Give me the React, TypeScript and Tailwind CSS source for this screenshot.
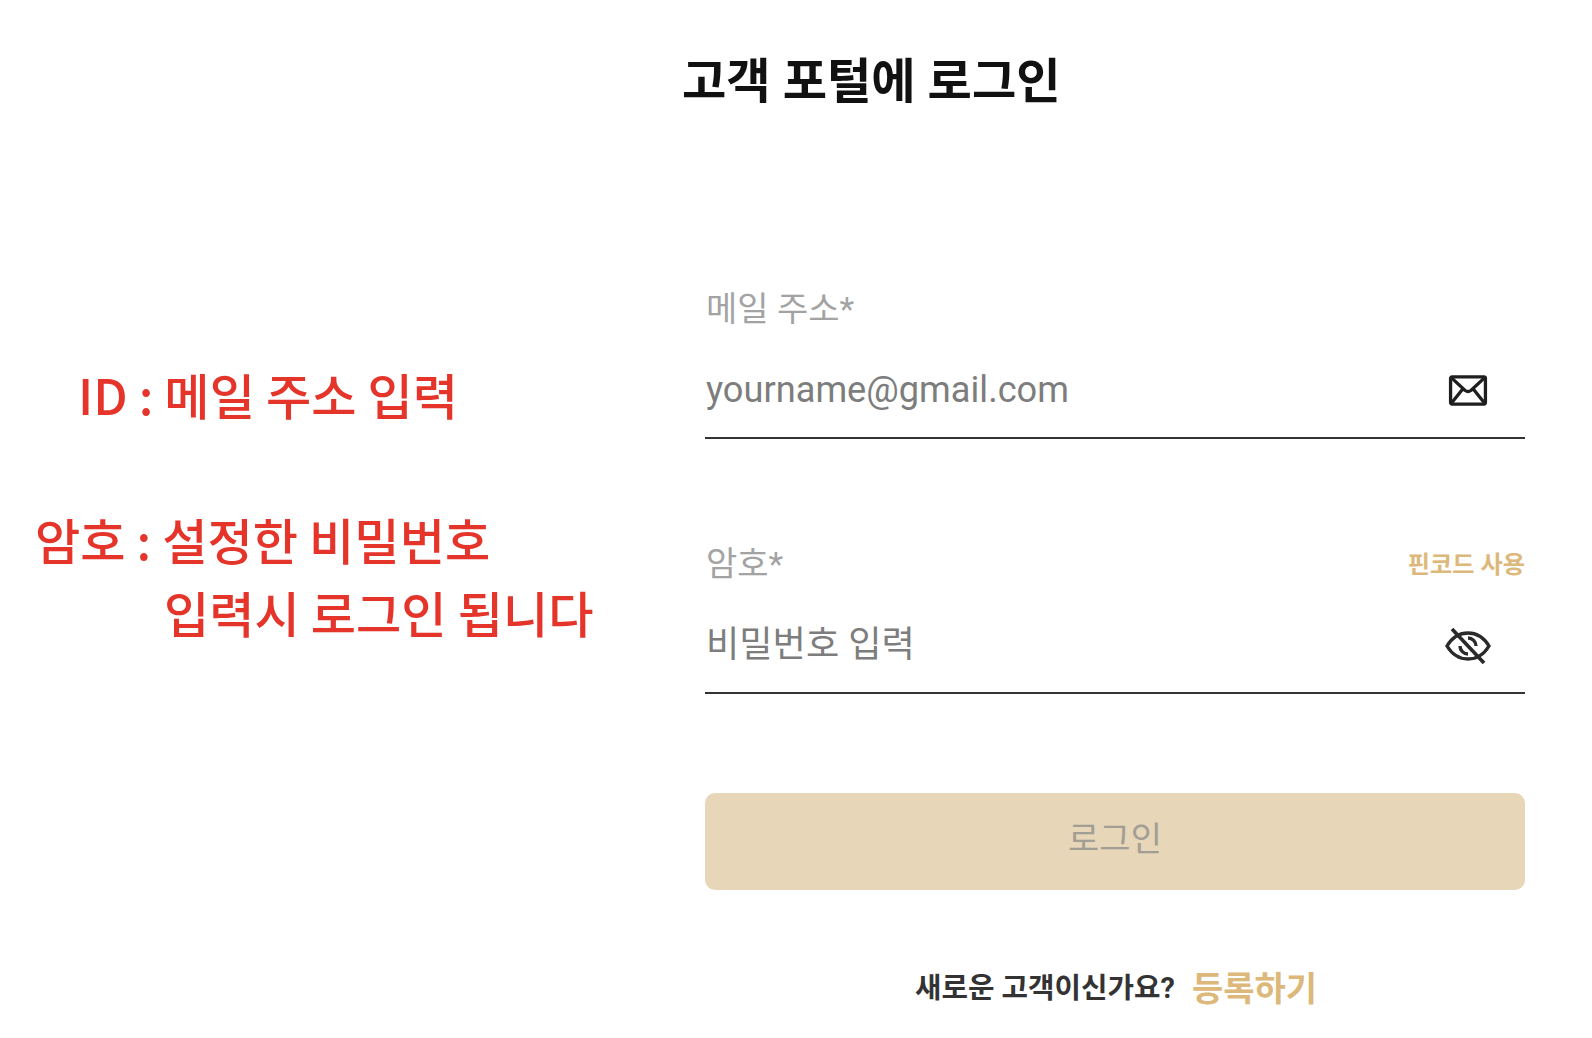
const fontStack = "font-['Roboto','Noto_Sans_CJK_KR',sans-serif]";

const MailIcon = () => (
  <svg width="40" height="31" viewBox="0 0 40 32" fill="none" stroke="#1f1f1f" strokeWidth="3.4">
    <rect x="2" y="2" width="36" height="28" rx="1.5" />
    <path d="M3 3 L17 16 Q20 18 23 16 L37 3" />
    <path d="M3 29 L15 14" />
    <path d="M37 29 L25 14" />
  </svg>
);

const EyeOffIcon = () => (
  <svg width="47" height="38" viewBox="0 0 46 38" fill="none" stroke="#2a2a2a" strokeWidth="3.4">
    <path d="M2 19 C8 9 15 6 23 6 C31 6 38 9 44 19 C38 29 31 32 23 32 C15 32 8 29 2 19 Z" />
    <path d="M23 11 A8 8 0 0 1 31 19" />
    <path d="M15 19 A8 8 0 0 0 23 27" />
    <path d="M7 2 L39 36" strokeWidth="3.6" />
  </svg>
);

const Field = ({ label, placeholder, icon, pin }: { label: string; placeholder: string; icon: React.ReactNode; pin?: boolean }) => (
  <div className="flex flex-col">
    <div className="flex items-center justify-between h-[40px]">
      <span className="text-[34px] leading-[40px] text-[#a3a3a3] pl-[1px]">{label}</span>
      {pin && <span className="text-[24.2px] font-bold text-[#dcb87a] pt-[2px]">핀코드 사용</span>}
    </div>
    <div className="flex items-center justify-between h-[89px] border-b-2 border-[#333] mt-[21px] pb-[6px]">
      <span className="text-[36.2px] text-[#7d7d7d] pl-[1px]">{placeholder}</span>
      <span className="flex w-[46px] justify-center mr-[34px]">{icon}</span>
    </div>
  </div>
);

export default function App() {
  return (
    <div className={`w-[1592px] h-[1038px] bg-white overflow-hidden ${fontStack}`}>
      <h1 className="pl-[682px] pt-[52px] h-[289px] text-[48.2px] leading-[60px] font-bold text-[#111]">고객 포털에 로그인</h1>
      <div className="flex">
        <div className="w-[705px] pt-[68px] text-[49.2px] leading-[73px] font-medium text-[#e5342a] font-['Noto_Sans_CJK_KR',sans-serif]">
          <p className="pl-[78px]">ID : 메일 주소 입력</p>
          <p className="pl-[35px] mt-[72px]">암호 : 설정한 비밀번호</p>
          <p className="pl-[164px]">입력시 로그인 됩니다</p>
        </div>
        <div className="w-[820px] flex flex-col">
          <Field label="메일 주소*" placeholder="yourname@gmail.com" icon={<MailIcon />} />
          <div className="mt-[105px]">
            <Field label="암호*" placeholder="비밀번호 입력" icon={<EyeOffIcon />} pin />
          </div>
          <button className="mt-[99px] h-[97px] rounded-[10px] bg-[#e7d6b8] text-[34px] text-[#a39e94] pb-[4px]">로그인</button>
          <p className="mt-[74px] flex items-center justify-center gap-[17px] h-[50px] pl-[2px]">
            <span className="text-[28.8px] font-bold text-[#333]">새로운 고객이신가요?</span>
            <span className="text-[34px] font-bold text-[#dcb87a]">등록하기</span>
          </p>
        </div>
      </div>
    </div>
  );
}
